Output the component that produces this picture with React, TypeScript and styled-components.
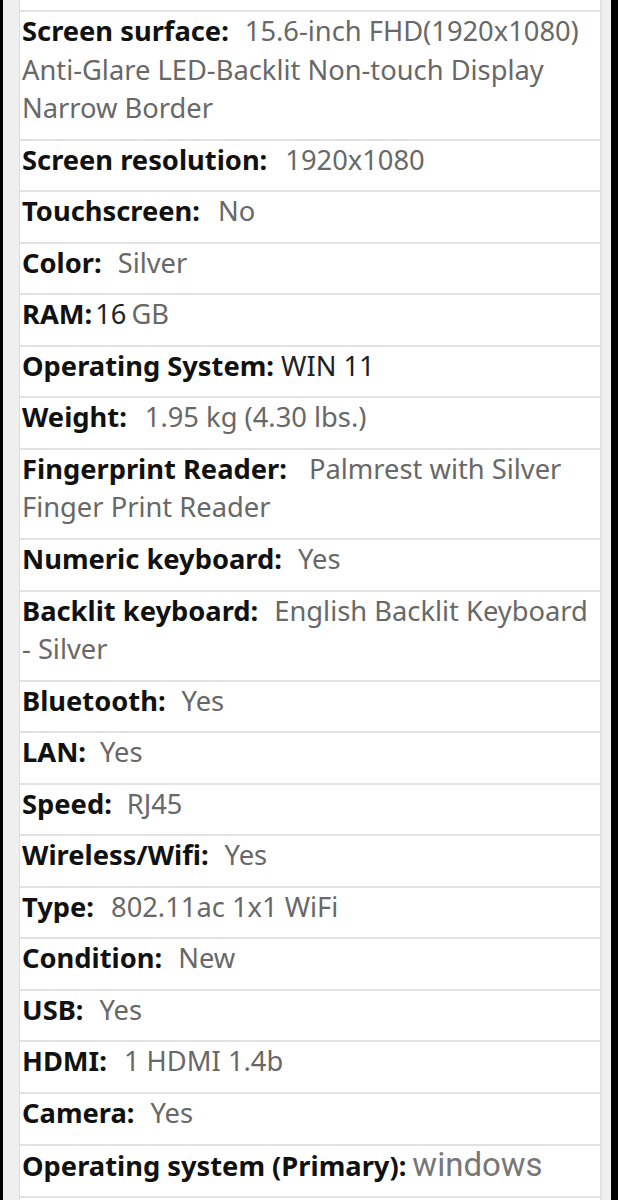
import React from "react";
import styled, { createGlobalStyle } from "styled-components";

const GlobalStyle = createGlobalStyle`
  html, body {
    margin: 0;
    padding: 0;
    background: #000;
  }
  body {
    font-family: "Noto Sans", "Open Sans", sans-serif;
  }
`;

const Page = styled.div`
  margin: 0 7px 0 3px;
  padding: 0 9px 0 16px;
  background: #efefef;
  height: 1200px;
  overflow: hidden;
`;

const Table = styled.div`
  background: #fff;
  border-left: 1px solid #dcdcdc;
  border-right: 2px solid #e2e2e2;
  padding-top: 10px;
  min-height: 1200px;
`;

const Row = styled.div`
  border-top: 2px solid #e2e2e2;
  padding: 0 4px 11px 2px;
  font-size: 27.3px;
  line-height: 38.55px;
  color: #686868;
`;

const Label = styled.span`
  font-weight: 700;
  color: #111;
`;

const Value = styled.span<{ $gap: number; $dark?: boolean; $alt?: boolean }>`
  margin-left: ${(p) => p.$gap}px;
  color: ${(p) => (p.$dark ? "#222" : p.$alt ? "#777" : "#686868")};
  ${(p) =>
    p.$alt &&
    `font-family: Roboto, "Liberation Sans", sans-serif; font-size: 33px;`}
`;

const Unit = styled.span`
  margin-left: 5px;
  color: #686868;
`;

type Spec = {
  label: string;
  value: string;
  gap?: number;
  dark?: boolean;
  alt?: boolean;
  unit?: string;
};

const specs: Spec[] = [
  {
    label: "Screen surface:",
    value:
      "15.6-inch FHD(1920x1080) Anti-Glare LED-Backlit Non-touch Display Narrow Border",
  },
  { label: "Screen resolution:", value: "1920x1080", gap: 18 },
  { label: "Touchscreen:", value: "No", gap: 18 },
  { label: "Color:", value: "Silver" },
  { label: "RAM:", value: "16", gap: 3, dark: true, unit: "GB" },
  { label: "Operating System:", value: "WIN 11", gap: 7, dark: true },
  { label: "Weight:", value: "1.95 kg (4.30 lbs.)", gap: 18 },
  {
    label: "Fingerprint Reader:",
    value: "Palmrest with Silver Finger Print Reader",
    gap: 22,
  },
  { label: "Numeric keyboard:", value: "Yes" },
  {
    label: "Backlit keyboard:",
    value: "English Backlit Keyboard - Silver",
    gap: 16,
  },
  { label: "Bluetooth:", value: "Yes" },
  { label: "LAN:", value: "Yes", gap: 14 },
  { label: "Speed:", value: "RJ45", gap: 15 },
  { label: "Wireless/Wifi:", value: "Yes" },
  { label: "Type:", value: "802.11ac 1x1 WiFi", gap: 17 },
  { label: "Condition:", value: "New" },
  { label: "USB:", value: "Yes" },
  { label: "HDMI:", value: "1 HDMI 1.4b", gap: 17 },
  { label: "Camera:", value: "Yes" },
  { label: "Operating system (Primary):", value: "windows", gap: 6, alt: true },
  { label: "", value: "" },
];

export default function App() {
  return (
    <>
      <GlobalStyle />
      <Page>
        <Table>
          {specs.map((s, i) => (
            <Row key={i}>
              <Label>{s.label}</Label>
              <Value $gap={s.gap ?? 16} $dark={s.dark} $alt={s.alt}>
                {s.value}
              </Value>
              {s.unit && <Unit>{s.unit}</Unit>}
            </Row>
          ))}
        </Table>
      </Page>
    </>
  );
}
